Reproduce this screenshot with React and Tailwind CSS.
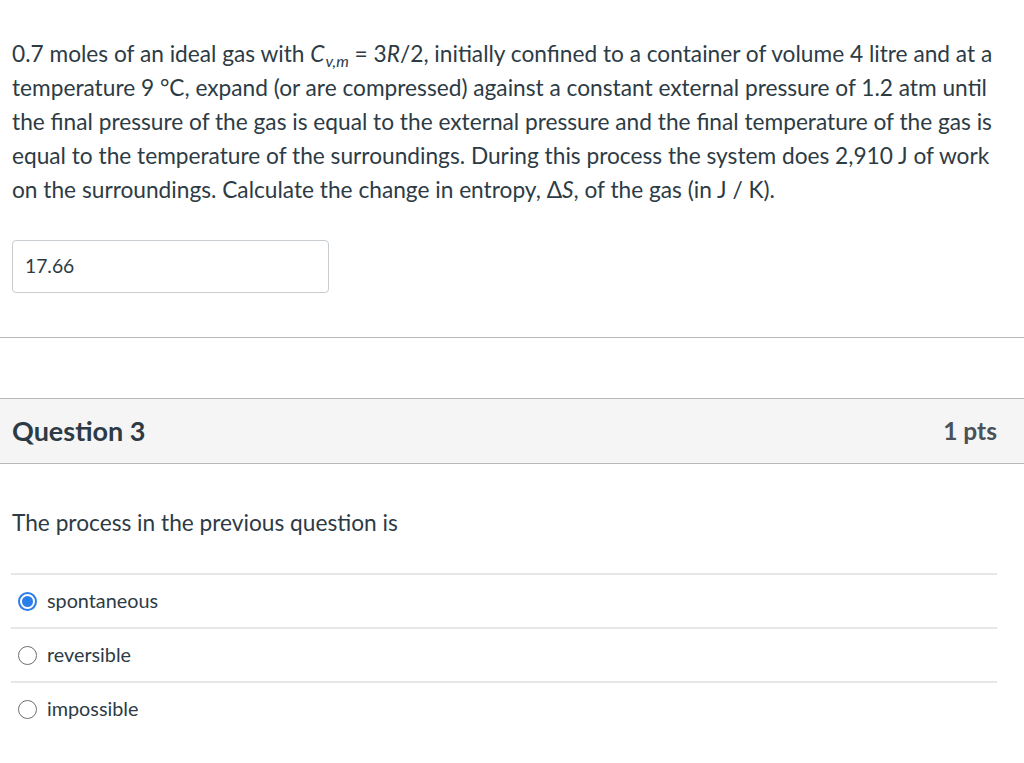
import React from "react";

function Radio({ checked }) {
  return checked ? (
    <span className="flex h-[19px] w-[19px] items-center justify-center rounded-full border-2 border-[#2b7de9] bg-white">
      <span className="h-[11px] w-[11px] rounded-full bg-[#2b7de9]" />
    </span>
  ) : (
    <span className="h-[19px] w-[19px] rounded-full border-[1.5px] border-[#6b6f72] bg-white" />
  );
}

export default function App() {
  const answers = [
    { label: "spontaneous", checked: true },
    { label: "reversible", checked: false },
    { label: "impossible", checked: false },
  ];
  return (
    <div className="min-h-[763px] bg-white text-[#2d3b45]" style={{ fontFamily: "Lato, 'Noto Sans', sans-serif" }}>
      <div className="px-3 pt-[37px]">
        <p className="text-[22.7px] leading-[34px]">
          0.7 moles of an ideal gas with <i>C</i>
          <span className="relative top-[5px] ml-[1px] text-[16px] leading-none italic">v,m</span> = 3<i>R</i>/2, initially confined to a container of volume 4 litre and at a temperature 9 °C, expand (or are compressed) against a constant external pressure of 1.2 atm until the final pressure of the gas is equal to the external pressure and the final temperature of the gas is equal to the temperature of the surroundings. During this process the system does 2,910 J of work on the surroundings. Calculate the change in entropy, Δ<i>S</i>, of the gas (in J / K).
        </p>
        <div className="mt-[33px] flex h-[53px] w-[317px] items-center rounded-[4px] border border-[#c7cdd1] px-3 text-[19.3px]">
          17.66
        </div>
      </div>
      <div className="mt-[44px] border-t border-[#b5b9bc]" />
      <div className="mt-[60px] flex h-[66px] items-center justify-between border-y border-[#b5b9bc] bg-[#f5f5f5] pl-3 pr-[27px]">
        <span className="text-[27px] font-bold text-[#2d3b45]">Question 3</span>
        <span className="text-[24.5px] font-bold text-[#4a5157]">1 pts</span>
      </div>
      <div className="px-3">
        <p className="mt-[45px] text-[22.7px] leading-[28px]">The process in the previous question is</p>
        <div className="mt-[36px] w-[986px] -ml-px">
          {answers.map((a) => (
            <div key={a.label} className="flex h-[54px] items-center gap-[10px] border-t-2 border-[#e4e6e8] pl-[7px]">
              <Radio checked={a.checked} />
              <span className="text-[19.8px]">{a.label}</span>
            </div>
          ))}
        </div>
      </div>
    </div>
  );
}
